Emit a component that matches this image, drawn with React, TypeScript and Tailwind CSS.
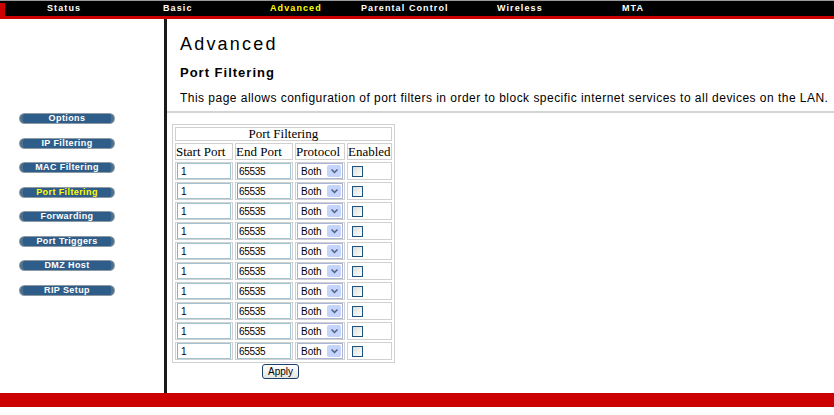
const navItems = [
  { label: "Status", w: "w-[116px]", active: false },
  { label: "Basic", w: "w-[107px]", active: false },
  { label: "Advanced", w: "w-[91px]", active: true },
  { label: "Parental Control", w: "w-[136px]", active: false },
  { label: "Wireless", w: "w-[125px]", active: false },
  { label: "MTA", w: "w-[60px]", active: false },
];

const sideItems = [
  "Options",
  "IP Filtering",
  "MAC Filtering",
  "Port Filtering",
  "Forwarding",
  "Port Triggers",
  "DMZ Host",
  "RIP Setup",
];

const rows = Array.from({ length: 10 }, (_, i) => i);

function SideButton({ label, active }: { label: string; active: boolean }) {
  return (
    <div className="w-[96px] h-[11px] rounded-full bg-[#8d9aa3] p-[1px]">
      <div className="h-full rounded-full bg-[#2f5d89] border-x-[3px] border-[#4c6f8e] flex items-center justify-center">
        <span
          className={`text-[9px] leading-none font-bold tracking-[0.4px] ${
            active ? "text-[#ffff00]" : "text-white"
          }`}
        >
          {label}
        </span>
      </div>
    </div>
  );
}

function Row() {
  return (
    <tr>
      <td className="border border-[#d0d0d0] px-[1px] py-0">
        <div className="w-[54px] h-[16px] border border-[#9fc4cf] border-l-[#7fb5c5] flex items-center pl-[3px] text-[10px] font-['Liberation_Sans',sans-serif]">
          1
        </div>
      </td>
      <td className="border border-[#d0d0d0] px-[1px] py-0">
        <div className="w-[54px] h-[16px] border border-[#9fc4cf] border-l-[#6fa8b8] flex items-center pl-[1px] text-[10px] tracking-[-0.3px] font-['Liberation_Sans',sans-serif]">
          65535
        </div>
      </td>
      <td className="border border-[#d0d0d0] px-[1px] py-0">
        <div className="w-[46px] h-[16px] border border-[#a9b4d6] flex items-center justify-between pl-[3px] pr-[1px] text-[10px] font-['Liberation_Sans',sans-serif]">
          <span>Both</span>
          <span className="w-[14px] h-[12px] bg-[#c5d4fb] rounded-[2px] flex items-center justify-center">
            <svg width="7" height="5" viewBox="0 0 7 5">
              <path d="M0.5 0.5 L3.5 3.5 L6.5 0.5" stroke="#4d6185" strokeWidth="1.5" fill="none" />
            </svg>
          </span>
        </div>
      </td>
      <td className="border border-[#d0d0d0] px-[3px] py-0">
        <div className="w-[11px] h-[11px] border border-[#1c5180] bg-gradient-to-br from-[#dcdcd7] to-white ml-[1px]" />
      </td>
    </tr>
  );
}

export default function App() {
  return (
    <div className="w-[834px] h-[415px] bg-white flex flex-col overflow-hidden font-['Liberation_Sans',Arial,sans-serif]">
      {/* top navigation */}
      <div className="h-[1px] bg-[#9a9a9a]" />
      <div className="h-[15px] bg-black flex items-center relative pl-[47px]">
        <div className="absolute left-0 top-[2px] bottom-0 w-[5px] bg-[#cc0000]" />
        {navItems.map((n) => (
          <span
            key={n.label}
            className={`${n.w} shrink-0 text-[9px] font-bold leading-none tracking-[1.1px] ${
              n.active ? "text-[#ffff00]" : "text-white"
            }`}
          >
            {n.label}
          </span>
        ))}
      </div>
      <div className="h-[3px] bg-[#cc0000]" />

      {/* body */}
      <div className="h-[374px] flex">
        <div className="w-[164px] flex flex-col gap-[13.5px] pt-[94px] pl-[19px]">
          {sideItems.map((s) => (
            <SideButton key={s} label={s} active={s === "Port Filtering"} />
          ))}
        </div>
        <div className="w-[3px] bg-[#1a1a1a]" />
        <div className="flex-1 flex flex-col">
          <div className="pl-[13px] pt-[14px]">
            <h1 className="text-[18px] leading-[22px] tracking-[2.2px] text-black">Advanced</h1>
            <h2 className="text-[13px] leading-[16px] font-bold tracking-[1px] mt-[10px] text-black">Port Filtering</h2>
            <p className="text-[12px] leading-[14px] tracking-[0.47px] mt-[10px] text-black whitespace-nowrap">
              This page allows configuration of port filters in order to block specific internet services to all devices on the LAN.
            </p>
          </div>
          <div className="h-[2px] bg-[#d4d4d4] mt-[6px]" />
          <div className="pl-[5px] pt-[11px] flex flex-col items-start">
            <table className="border border-[#d0d0d0] border-separate border-spacing-[2px] font-['Liberation_Serif',serif] text-[13px] text-black">
              <tbody>
                <tr>
                  <td colSpan={4} className="border border-[#d0d0d0] text-center leading-[12px] py-0">
                    Port Filtering
                  </td>
                </tr>
                <tr>
                  <td className="border border-[#d0d0d0] leading-[15px] px-0">Start Port</td>
                  <td className="border border-[#d0d0d0] leading-[15px] px-0">End Port</td>
                  <td className="border border-[#d0d0d0] leading-[15px] px-0">Protocol</td>
                  <td className="border border-[#d0d0d0] leading-[15px] px-0">Enabled</td>
                </tr>
                {rows.map((r) => (
                  <Row key={r} />
                ))}
              </tbody>
            </table>
            <button className="ml-[90px] mt-[1px] h-[15px] px-[5px] border border-[#1c3f6e] rounded-[3px] bg-gradient-to-b from-white to-[#e6e6e0] text-[10px] leading-none text-black">
              Apply
            </button>
          </div>
        </div>
      </div>
      <div className="h-[14px] bg-[#cc0000]" />
      <div className="flex-1 bg-white" />
    </div>
  );
}
